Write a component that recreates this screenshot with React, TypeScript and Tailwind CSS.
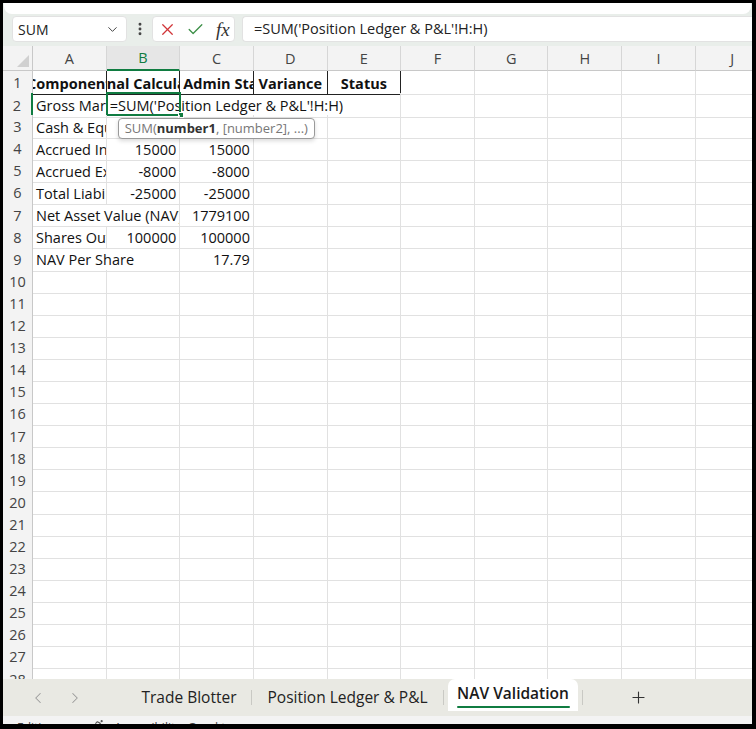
import { ChevronDown, ChevronLeft, ChevronRight, Check, X, EllipsisVertical, Plus, Accessibility } from "lucide-react";

type Cell = { t?: string; a?: "l" | "r" | "c"; b?: boolean; span?: 1 | 2 | 4; sel?: boolean };

const COLS = ["A", "B", "C", "D", "E", "F", "G", "H", "I", "J"];
const GRID = "grid grid-cols-[30px_repeat(10,73.65px)]";

const spanClass = { 1: "", 2: "col-span-2", 4: "col-span-4" };
const alignClass = { l: "justify-start", r: "justify-end", c: "justify-center" };

const data: Cell[][] = [
	[
		{ t: "Component", a: "c", b: true },
		{ t: "Internal Calculation", a: "c", b: true },
		{ t: "Admin Statement", a: "l", b: true },
		{ t: "Variance", a: "c", b: true },
		{ t: "Status", a: "c", b: true },
	],
	[{ t: "Gross Market Value" }, { t: "=SUM('Position Ledger & P&L'!H:H)", span: 4, sel: true }],
	[{ t: "Cash & Equivalents" }],
	[{ t: "Accrued Interest" }, { t: "15000", a: "r" }, { t: "15000", a: "r" }],
	[{ t: "Accrued Expenses" }, { t: "-8000", a: "r" }, { t: "-8000", a: "r" }],
	[{ t: "Total Liabilities" }, { t: "-25000", a: "r" }, { t: "-25000", a: "r" }],
	[{ t: "Net Asset Value (NAV)", span: 2 }, { t: "1779100", a: "r" }],
	[{ t: "Shares Outstanding" }, { t: "100000", a: "r" }, { t: "100000", a: "r" }],
	[{ t: "NAV Per Share", span: 2 }, { t: "17.79", a: "r" }],
];

function fillRow(cells: Cell[]) {
	const out = [...cells];
	let used = out.reduce((n, c) => n + (c.span || 1), 0);
	while (used < 10) {
		out.push({});
		used++;
	}
	return out;
}

function SheetRow({ n, cells }: { n: number; cells: Cell[] }) {
	const isHead = n === 1;
	return (
		<div className={`${GRID} h-[22.1px]`}>
			<div
				className={`flex items-center justify-center pt-[1px] bg-[#f3f3f3] border-b border-[#dcdcdc] text-[14.5px] text-[#444] ${
					n === 2 ? "border-r-2 border-r-[#107c41]" : "border-r border-r-[#c8c8c8]"
				}`}
			>
				{n}
			</div>
			{fillRow(cells).map((c, i) => {
				const head = isHead && i < 5;
				return (
					<div
						key={i}
						className={`relative h-full flex items-center pt-[2px] whitespace-nowrap px-[3px] text-[14.5px] text-[#111] border-r border-b ${
							head ? "border-[#222]" : "border-[#e1e1e1]"
						} ${spanClass[c.span || 1]} ${alignClass[c.a || "l"]} ${c.b ? "font-bold" : ""} ${
							c.sel ? "overflow-visible border-r-[#e1e1e1]" : "overflow-hidden"
						}`}
					>
						<span className={c.sel ? "overflow-hidden" : ""}>{c.t}</span>
						{c.sel && (
							<>
								<div className="absolute left-[-1px] top-[-1px] w-[75.65px] h-[24.1px] border-2 border-[#107c41] pointer-events-none" />
								<div className="absolute left-[71px] top-[19px] w-[6px] h-[6px] bg-[#107c41] border border-white" />
								<div className="absolute left-[11px] top-[25px] z-10 h-[21px] px-[6px] flex items-center bg-white border border-[#9a9a9a] rounded-[4px] shadow-[0_2px_4px_rgba(0,0,0,0.15)] text-[13px] text-[#777] font-normal">
									SUM(<span className="font-bold text-[#333]">number1</span>, [number2], ...)
								</div>
							</>
						)}
					</div>
				);
			})}
		</div>
	);
}

export default function App() {
	const rows: Cell[][] = [];
	for (let i = 0; i < 28; i++) rows.push(data[i] || []);

	return (
		<div className="w-[756px] h-[729px] overflow-hidden bg-black border-black border-t-[3px] border-l-[3px] border-r-[4px] border-b-[5px] font-['Open_Sans',sans-serif]">
			<div className="flex flex-col h-full bg-[#e9eeea]">
				{/* ribbon edge */}
				<div className="h-[12px] shrink-0">
					<div className="h-[11px] mx-[1px] bg-white rounded-b-[8px]" />
				</div>

				{/* formula bar */}
				<div className="h-[31px] shrink-0 flex items-start pt-[1px]">
					<div className="ml-[9px] w-[115px] h-[26px] flex items-center justify-between bg-white rounded-[4px] border border-[#e2e2e2] pl-[5px] pr-[6px] text-[14px] text-[#222]">
						<span>SUM</span>
						<ChevronDown size={15} strokeWidth={1.6} className="text-[#444]" />
					</div>
					<div className="w-[25px] h-[26px] flex items-center justify-center">
						<EllipsisVertical size={16} strokeWidth={2.4} className="text-[#444]" />
					</div>
					<div className="w-[83px] h-[26px] flex items-center gap-[9px] pl-[5px] bg-white rounded-[4px] border border-[#e2e2e2]">
						<X size={19} strokeWidth={1.6} className="text-[#d13438]" />
						<Check size={19} strokeWidth={1.6} className="text-[#3a8e45]" />
						<span className="font-['Liberation_Serif',serif] italic text-[19px] leading-none text-[#333] ml-[2px]">fx</span>
					</div>
					<div className="ml-[7px] flex-1 h-[26px] flex items-center bg-white rounded-l-[4px] border border-r-0 border-[#e2e2e2] pl-[11px] text-[14.5px] text-[#222]">
						=SUM('Position Ledger &amp; P&amp;L'!H:H)
					</div>
				</div>

				{/* sheet */}
				<div className="flex-1 bg-white overflow-hidden">
					<div className={`${GRID} h-[25px]`}>
						<div className="relative bg-[#f3f3f3] border-r border-r-[#c8c8c8] border-b border-b-[#c8c8c8]">
							<svg className="absolute right-[3px] bottom-[3px]" width="12" height="12" viewBox="0 0 12 12">
								<path d="M12 0 L12 12 L0 12 Z" fill="#d0d0d0" />
							</svg>
						</div>
						{COLS.map((c) => (
							<div
								key={c}
								className={`flex items-center justify-center pt-[1px] border-r border-[#d6d6d6] text-[14.5px] ${
									c === "B"
										? "bg-[#e6e6e6] text-[#107c41] border-b-2 border-b-[#107c41]"
										: "bg-[#f3f3f3] text-[#444] border-b border-b-[#c8c8c8]"
								}`}
							>
								{c}
							</div>
						))}
					</div>
					{rows.map((r, i) => (
						<SheetRow key={i} n={i + 1} cells={r} />
					))}
				</div>

				{/* sheet tabs */}
				<div className="h-[37px] shrink-0 flex bg-[#e9e9e3] text-[15.5px] text-[#222]">
					<div className="w-[124px] flex items-center pl-[26px] gap-[19px] text-[#9a9a9a]">
						<ChevronLeft size={18} strokeWidth={1.4} />
						<ChevronRight size={18} strokeWidth={1.4} />
					</div>
					<div className="w-[124px] flex items-center justify-center pt-[1px]">Trade Blotter</div>
					<div className="w-px h-[15px] self-center bg-[#c9c9c4]" />
					<div className="w-[191px] flex items-center justify-center pt-[1px]">Position Ledger &amp; P&amp;L</div>
					<div className="w-px h-[15px] self-center bg-[#c9c9c4]" />
					<div className="ml-[4px] w-[130px] h-[32px] relative flex items-center justify-center bg-white rounded-t-[7px] font-semibold text-[#1a1a1a] pb-[3px]">
						NAV Validation
						<div className="absolute left-[9px] right-[8px] bottom-[3px] h-[2px] rounded bg-[#107c41]" />
					</div>
					<div className="ml-[4px] w-px h-[15px] self-center bg-[#c9c9c4]" />
					<div className="w-[110px] flex items-center justify-center">
						<Plus size={19} strokeWidth={1.4} className="text-[#333]" />
					</div>
				</div>

				{/* status bar */}
				<div className="h-[8px] shrink-0 overflow-hidden bg-[#f3f3f3] flex items-start pt-[6px] pl-[14px] text-[12px] leading-[12px] text-[#444]">
					<span>Editing</span>
					<Accessibility size={13} className="ml-[38px] mt-[-3px] text-[#555]" />
					<span className="ml-[8px]">Accessibility: Good to go</span>
				</div>
			</div>
		</div>
	);
}
